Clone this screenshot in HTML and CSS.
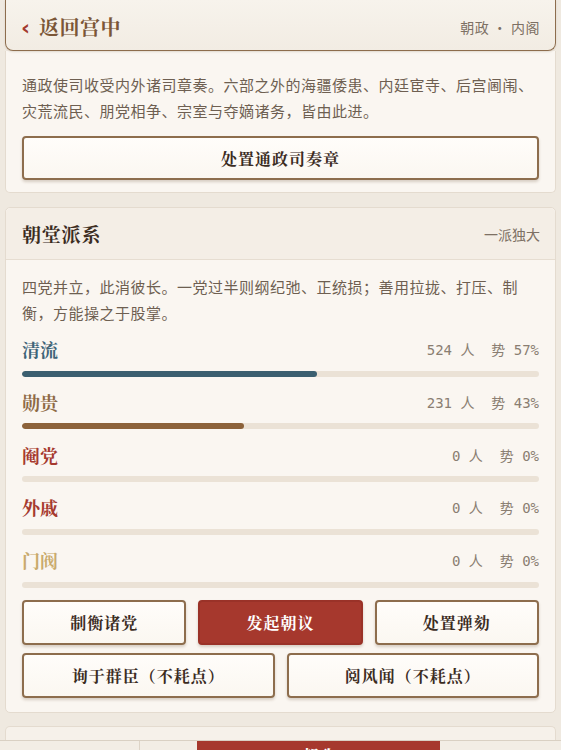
FILE: index.html
```html
<!DOCTYPE html>
<html lang="zh-CN">
<head>
<meta charset="utf-8">
<title>朝政 · 内阁</title>
<link rel="stylesheet" href="styles.css">
</head>
<body>
<div class="page">
  <header class="topbar">
    <div class="back"><span class="chev">‹</span><span class="back-text">返回宫中</span></div>
    <div class="crumb">朝政 · 内阁</div>
  </header>

  <section class="card card-first">
    <p class="desc">通政使司收受内外诸司章奏。六部之外的海疆倭患、内廷宦寺、后宫阃闱、灾荒流民、朋党相争、宗室与夺嫡诸务，皆由此进。</p>
    <button class="btn btn-wide">处置通政司奏章</button>
  </section>

  <section class="card">
    <div class="card-head">
      <h2 class="card-title">朝堂派系</h2>
      <span class="card-tag">一派独大</span>
    </div>
    <div class="card-body">
      <p class="desc">四党并立，此消彼长。一党过半则纲纪弛、正统损；善用拉拢、打压、制衡，方能操之于股掌。</p>
      <div class="factions">
        <div class="faction">
          <div class="f-line"><span class="f-name f-qing">清流</span><span class="f-stat">524 人  势 57%</span></div>
          <div class="track"><div class="fill fill-qing" style="width:57%"></div></div>
        </div>
        <div class="faction">
          <div class="f-line"><span class="f-name f-xun">勋贵</span><span class="f-stat">231 人  势 43%</span></div>
          <div class="track"><div class="fill fill-xun" style="width:43%"></div></div>
        </div>
        <div class="faction">
          <div class="f-line"><span class="f-name f-yan">阉党</span><span class="f-stat">0 人  势 0%</span></div>
          <div class="track"></div>
        </div>
        <div class="faction">
          <div class="f-line"><span class="f-name f-yan">外戚</span><span class="f-stat">0 人  势 0%</span></div>
          <div class="track"></div>
        </div>
        <div class="faction">
          <div class="f-line"><span class="f-name f-men">门阀</span><span class="f-stat">0 人  势 0%</span></div>
          <div class="track"></div>
        </div>
      </div>
      <div class="actions three">
        <button class="btn">制衡诸党</button>
        <button class="btn btn-red">发起朝议</button>
        <button class="btn">处置弹劾</button>
      </div>
      <div class="actions two">
        <button class="btn">询于群臣（不耗点）</button>
        <button class="btn">阅风闻（不耗点）</button>
      </div>
    </div>
  </section>

  <section class="card card-stub"></section>
</div>

<nav class="tabbar">
  <div class="tab tab-first"></div>
  <div class="tab tab-gap"></div>
  <div class="tab tab-active">朝政</div>
  <div class="tab tab-rest"></div>
</nav>
</body>
</html>
```

FILE: styles.css
```css
* { box-sizing: border-box; }

html, body {
  margin: 0;
  padding: 0;
}

body {
  background: #efe9e0;
  font-family: "Noto Sans CJK SC", "Noto Sans", sans-serif;
  color: #6b5b4c;
}

.page {
  padding: 0 5px 0 5px;
}

.topbar {
  height: 51px;
  display: flex;
  align-items: center;
  justify-content: space-between;
  padding: 3px 15px 0 15px;
  background: linear-gradient(#f7f3ec, #f2ece3);
  border: 1px solid #8d6d4d;
  border-top: none;
  border-radius: 0 0 8px 8px;
  box-shadow: 0 1px 2px rgba(90, 60, 30, 0.15);
  position: relative;
  z-index: 2;
}

.back {
  display: flex;
  align-items: center;
}

.chev {
  color: #a33a2e;
  font-family: "DejaVu Sans", sans-serif;
  font-weight: 700;
  font-size: 22px;
  line-height: 1;
  margin-right: 9px;
  margin-top: 2px;
}

.back-text {
  font-family: "Noto Serif CJK SC", "Noto Sans CJK SC", serif;
  font-weight: 700;
  font-size: 20px;
  color: #7b5637;
  letter-spacing: 0.5px;
}

.crumb {
  font-size: 14px;
  color: #7d7064;
  letter-spacing: 0.5px;
}

.card {
  background: #faf6f1;
  border: 1px solid #e4dbcf;
  border-radius: 5px;
  margin-top: 14px;
}

.card-first {
  margin-top: 0;
  border-top: none;
  border-radius: 0 0 5px 5px;
  padding: 21px 16px 12px;
}

.desc {
  margin: 0;
  font-size: 15px;
  letter-spacing: 0.5px;
  line-height: 26px;
  color: #6e5f51;
}

.btn {
  display: block;
  height: 44px;
  border: 2px solid #8d6d4d;
  border-radius: 4px;
  background: linear-gradient(#fffdfa, #fbf7f1);
  box-shadow: 0 2px 3px rgba(80, 50, 20, 0.2);
  font-family: "Noto Serif CJK SC", "Noto Sans CJK SC", serif;
  font-weight: 700;
  font-size: 16px;
  letter-spacing: 1px;
  color: #3b2c1f;
  padding: 0;
  cursor: pointer;
}

.btn-wide {
  width: 100%;
  margin-top: 12px;
}

.btn-red {
  background: #a6382d;
  border-color: #9a3228;
  color: #fff;
}

.card-head {
  height: 52px;
  display: flex;
  align-items: center;
  justify-content: space-between;
  padding: 0 15px 0 16px;
  background: #f4eee6;
  border-bottom: 1px solid #e6ddd1;
  border-radius: 5px 5px 0 0;
}

.card-title {
  margin: 0;
  font-family: "Noto Serif CJK SC", "Noto Sans CJK SC", serif;
  font-weight: 700;
  font-size: 19px;
  color: #3b2c1f;
  letter-spacing: 0.8px;
}

.card-tag {
  font-size: 14px;
  color: #7d7064;
}

.card-body {
  padding: 14px 16px 14px;
}

.factions {
  margin-top: 11px;
  display: flex;
  flex-direction: column;
  gap: 13.25px;
}

.f-line {
  display: flex;
  justify-content: space-between;
  align-items: center;
  height: 24px;
}

.f-name {
  font-family: "Noto Serif CJK SC", "Noto Sans CJK SC", serif;
  font-weight: 700;
  font-size: 18px;
  line-height: 24px;
}

.f-qing { color: #3e6478; }
.f-xun { color: #8e6a45; }
.f-yan { color: #a63a2f; }
.f-men { color: #c9aa6c; }

.f-stat {
  font-family: "DejaVu Sans Mono", "Noto Sans CJK SC", monospace;
  font-size: 14px;
  color: #8a7e72;
  white-space: pre;
}

.track {
  margin-top: 9.5px;
  height: 6px;
  border-radius: 3px;
  background: #ebe2d6;
  overflow: hidden;
}

.fill {
  height: 100%;
  border-radius: 3px;
}

.fill-qing { background: #3b5f70; }
.fill-xun { background: #8c623a; }

.actions {
  display: grid;
  gap: 12px;
}

.actions .btn {
  width: 100%;
  height: 45px;
}

.actions.three {
  grid-template-columns: 1fr 1fr 1fr;
  margin-top: 12.5px;
}

.actions.two {
  grid-template-columns: 1fr 1fr;
  margin-top: 8px;
}

.card-stub {
  margin-top: 13px;
  height: 14px;
  border-bottom: none;
  border-radius: 5px 5px 0 0;
  background: #f6f1ea;
}

.tabbar {
  display: flex;
  height: 50px;
  background: #f2ede5;
  border-top: 1px solid #d9d0c3;
}

.tab {
  font-family: "Noto Serif CJK SC", "Noto Sans CJK SC", serif;
  font-weight: 700;
  font-size: 16px;
  line-height: 20px;
  padding-top: 5px;
  text-align: center;
  color: #7b5637;
}

.tab-first {
  width: 140px;
  border-right: 1px solid #ddd4c7;
}

.tab-gap { width: 57px; }

.tab-active {
  width: 243px;
  background: #a6382d;
  color: #fff;
}

.tab-rest { flex: 1; }
```
